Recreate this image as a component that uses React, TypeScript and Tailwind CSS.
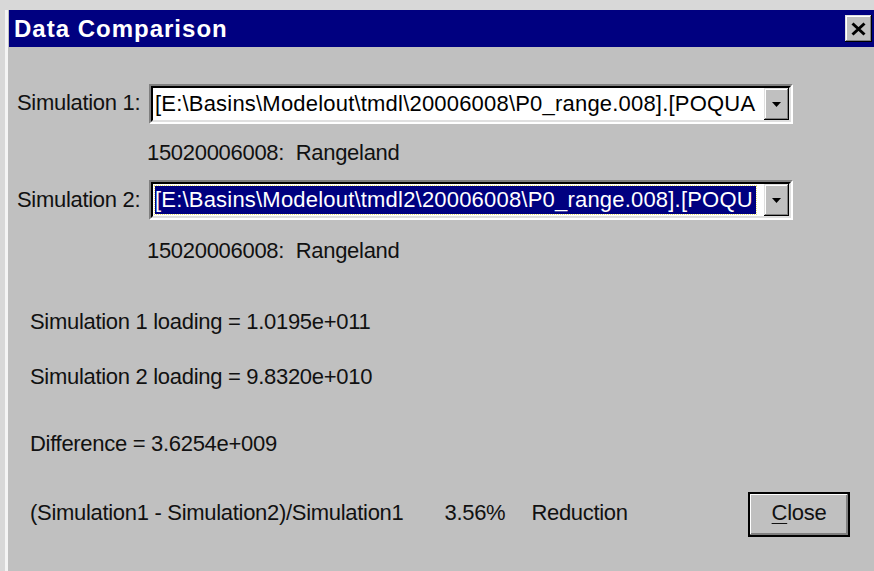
const raised =
  "shadow-[inset_-1px_-1px_#000,inset_1px_1px_#dfdfdf,inset_-2px_-2px_#808080,inset_2px_2px_#fff]";

function ArrowDown() {
  return (
    <svg width="9" height="5" viewBox="0 0 9 5">
      <path d="M0 0h9L4.5 5z" fill="#000" />
    </svg>
  );
}

function Combo({ text, selected }: { text: string; selected?: boolean }) {
  return (
    <div className="flex h-[40px] w-[644px] border-2 border-t-[#808080] border-l-[#808080] border-b-white border-r-white">
      <div className="flex min-w-0 flex-1 border-2 border-t-black border-l-black border-b-[#dfdfdf] border-r-[#dfdfdf] bg-white">
        <div className={`flex min-w-0 flex-1 items-center pl-[2px] ${selected ? "pr-[8px]" : "pr-[2px]"}`}>
          <div
            className={`h-[28px] w-full overflow-hidden whitespace-nowrap leading-[28px] tracking-[0.2px] ${
              selected
                ? "bg-[#000080] text-white outline-1 outline-dotted outline-[#e8e070]"
                : "text-black"
            }`}
          >
            {text}
          </div>
        </div>
        <div className={`flex w-[25px] items-center justify-center bg-[#c0c0c0] ${raised}`}>
          <ArrowDown />
        </div>
      </div>
    </div>
  );
}

export default function App() {
  return (
    <div className="h-[571px] w-[874px] overflow-hidden bg-[#d8d8d8] pt-[10px] pl-[5px] font-['Liberation_Sans',Arial,sans-serif] text-[22px] tracking-[-0.3px] text-[#111]">
      <div className="flex h-full flex-col border-l-[3px] border-[#f4f4f4] bg-[#c0c0c0] pl-[1px]">
        {/* title bar */}
        <div className="flex h-[37px] items-center justify-between bg-[#000080] pl-[5px]">
          <span className="text-[24px] font-bold tracking-[1px] text-white">Data Comparison</span>
          <div className={`mr-[2px] flex h-[27px] w-[27px] items-center justify-center bg-[#c0c0c0] ${raised}`}>
            <svg width="15" height="14" viewBox="0 0 15 14">
              <path d="M1.5 1.5l12 11M13.5 1.5l-12 11" stroke="#000" strokeWidth="3" />
            </svg>
          </div>
        </div>

        <div className="flex flex-col pl-[8px]">
          <div className="mt-[37px] flex items-center">
            <span className="w-[132px] pb-[4px]">Simulation 1:</span>
            <Combo text="[E:\Basins\Modelout\tmdl\20006008\P0_range.008].[POQUA" />
          </div>
          <div className="flex h-[56px] items-center pl-[130px]">15020006008:&nbsp; Rangeland</div>

          <div className="flex items-center">
            <span className="w-[132px] pb-[2px]">Simulation 2:</span>
            <Combo text="[E:\Basins\Modelout\tmdl2\20006008\P0_range.008].[POQU" selected />
          </div>
          <div className="flex h-[60px] items-center pl-[130px]">15020006008:&nbsp; Rangeland</div>

          <div className="pl-[13px]">
            <div className="mt-[22px] h-[40px] leading-[40px]">Simulation 1 loading = 1.0195e+011</div>
            <div className="mt-[15px] h-[40px] leading-[40px]">Simulation 2 loading = 9.8320e+010</div>
            <div className="mt-[27px] h-[40px] leading-[40px]">Difference = 3.6254e+009</div>
            <div className="mt-[28px] flex h-[45px] items-center">
              <span className="pb-[5px]">(Simulation1 - Simulation2)/Simulation1</span>
              <span className="ml-[41px] pb-[5px]">3.56%</span>
              <span className="ml-[26px] pb-[5px]">Reduction</span>
              <button className="ml-auto mr-[24px] flex h-[45px] w-[102px] items-center justify-center border-2 border-black bg-[#c0c0c0] pb-[4px] shadow-[inset_-1px_-1px_#808080,inset_1px_1px_#fff,inset_-2px_-2px_#808080] text-[#111]">
                <span className="underline decoration-1 underline-offset-[3px]">C</span>lose
              </button>
            </div>
          </div>
        </div>
      </div>
    </div>
  );
}
